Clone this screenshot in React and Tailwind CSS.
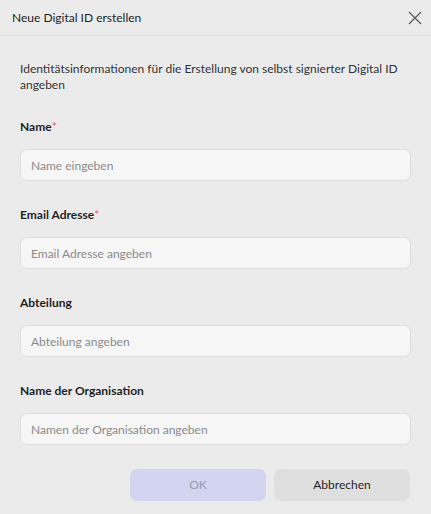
import React from "react";

const font = { fontFamily: 'Lato, "Noto Sans", sans-serif' };

function Field({ label, required, placeholder }) {
  return (
    <div className="flex flex-col">
      <div className="text-[12px] leading-[16px] font-bold text-[#1f1f1f] h-[16px]">
        {label}
        {required && <span className="text-[#e8606a] font-normal">*</span>}
      </div>
      <input
        className="mt-[14px] h-[32px] w-full rounded-[7px] border border-[#dedede] bg-[#f6f6f6] px-[10px] text-[12px] text-[#333] placeholder:text-[#8a8a8a] outline-none"
        placeholder={placeholder}
      />
    </div>
  );
}

export default function App() {
  return (
    <div className="w-[431px] h-[514px] bg-[#ebebeb] flex flex-col" style={font}>
      <div className="h-[36px] border-b border-[#dcdcdc] flex items-center justify-between pl-[12px] pr-[9px]">
        <div className="text-[12px] text-[#1f1f1f]">Neue Digital ID erstellen</div>
        <svg width="14" height="14" viewBox="0 0 14 14" className="text-[#555]">
          <path d="M1 1 L13 13 M13 1 L1 13" stroke="currentColor" strokeWidth="1.1" fill="none" />
        </svg>
      </div>
      <div className="px-[20px] pt-[25px] flex flex-col">
        <div className="text-[12px] leading-[16px] text-[#333]">
          Identitätsinformationen für die Erstellung von selbst signierter Digital ID angeben
        </div>
        <div className="mt-[26px] flex flex-col gap-[26px]">
          <Field label="Name" required placeholder="Name eingeben" />
          <Field label="Email Adresse" required placeholder="Email Adresse angeben" />
          <Field label="Abteilung" placeholder="Abteilung angeben" />
          <Field label="Name der Organisation" placeholder="Namen der Organisation angeben" />
        </div>
        <div className="mt-[24px] flex justify-end gap-[8px] pr-[1px]">
          <button className="w-[136px] h-[32px] rounded-[7px] bg-[#d3d4ef] text-[12px] text-[#9a9aa8]">OK</button>
          <button className="w-[136px] h-[32px] rounded-[7px] bg-[#dfdfdf] text-[12px] text-[#1f1f1f]">Abbrechen</button>
        </div>
      </div>
    </div>
  );
}
